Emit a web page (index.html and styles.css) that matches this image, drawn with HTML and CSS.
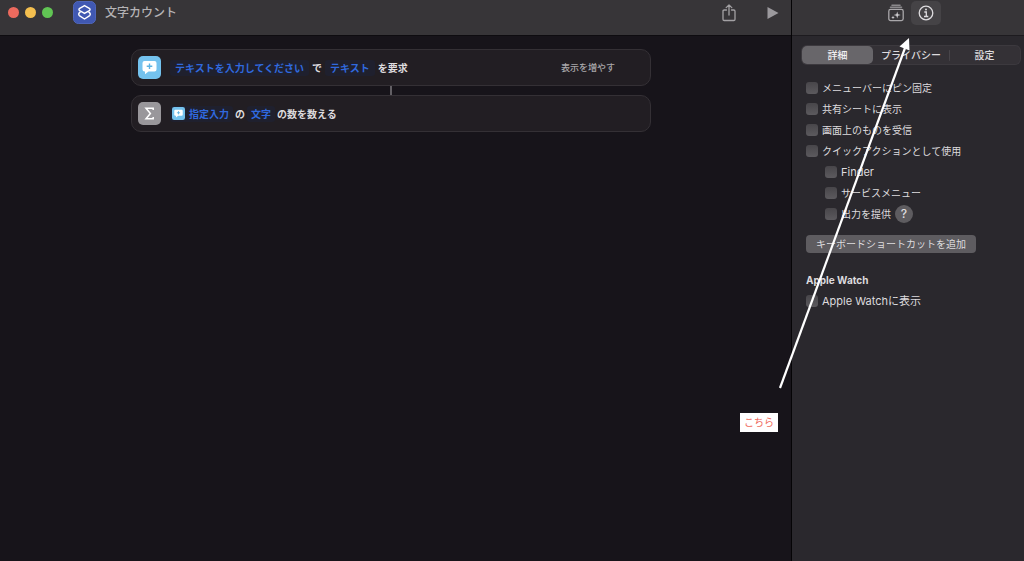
FILE: index.html
```html
<!DOCTYPE html>
<html lang="ja">
<head>
    <meta charset="UTF-8">
    <meta name="viewport" content="width=device-width, initial-scale=1.0">
    <title>文字カウント</title>
    <link rel="stylesheet" href="styles.css">
</head>
<body>
    <div class="window">
        <main class="editor">
            <header class="toolbar">
                <div class="lights">
                    <button class="light red" aria-label="閉じる"></button>
                    <button class="light yellow" aria-label="しまう"></button>
                    <button class="light green" aria-label="拡大"></button>
                </div>
                <svg class="app-icon" viewBox="0 0 24 24">
                    <rect x="0.5" y="0.5" width="23" height="23" rx="5" fill="#4058b2" stroke="#5268bd"/>
                    <g fill="none" stroke="#fff" stroke-width="1.5" stroke-linejoin="round" stroke-linecap="round">
                        <path d="M12 4.8 L17 7.6 Q18.6 8.8 17 10 L12 13 L7 10 Q5.4 8.8 7 7.6 Z"/>
                        <path d="M7.4 11.6 Q5 13.6 6.6 15.2 L12 18.8 L17.4 15.2 Q19 13.6 16.6 11.6"/>
                    </g>
                </svg>
                <h1 class="title">文字カウント</h1>
                <button class="tool share" aria-label="共有">
                    <svg width="16" height="18" viewBox="0 0 16 18" fill="none" stroke="#a3a1a4" stroke-width="1.3" stroke-linecap="round" stroke-linejoin="round">
                        <path d="M5.5 6 H3.2 Q2 6 2 7.2 V15.3 Q2 16.5 3.2 16.5 H12.8 Q14 16.5 14 15.3 V7.2 Q14 6 12.8 6 H10.5"/>
                        <path d="M8 11 V1 M5.2 3.6 L8 0.9 L10.8 3.6"/>
                    </svg>
                </button>
                <button class="tool" aria-label="実行">
                    <svg width="12" height="14" viewBox="0 0 12 14"><path d="M0.5 1 L11.5 7 L0.5 13 Z" fill="#9b999d"/></svg>
                </button>
            </header>

            <div class="actions">
                <section class="card">
                    <svg class="badge" viewBox="0 0 23 23">
                        <rect width="23" height="23" rx="5" fill="#74c2ee"/>
                        <path d="M6.5 5 H16.5 Q18.5 5 18.5 7 V13.5 Q18.5 15.5 16.5 15.5 H10.5 L7 18.2 V15.5 H6.5 Q4.5 15.5 4.5 13.5 V7 Q4.5 5 6.5 5 Z" fill="#fff"/>
                        <path d="M11.5 7.4 V13 M8.7 10.2 H14.3" stroke="#5db2e2" stroke-width="1.4"/>
                    </svg>
                    <p class="phrase ask">
                        <button class="token">テキストを入力してください</button>
                        <span>で</span>
                        <button class="token">テキスト</button>
                        <span>を要求</span>
                    </p>
                    <button class="more">表示を増やす</button>
                </section>
                <div class="connector"></div>
                <section class="card">
                    <svg class="badge" viewBox="0 0 23 23">
                        <rect width="23" height="23" rx="5" fill="#99979b"/>
                        <path d="M15.2 8 V6.3 H8 L12.4 11.4 L8 16.7 H15.2 V15" fill="none" stroke="#fff" stroke-width="1.5"/>
                    </svg>
                    <p class="phrase">
                        <button class="token variable">
                            <svg width="13" height="13" viewBox="0 0 23 23">
                                <rect width="23" height="23" rx="4" fill="#74c2ee"/>
                                <path d="M6 5 H17 Q19 5 19 7 V13.5 Q19 15.5 17 15.5 H11 L7 18.5 V15.5 H6 Q4 15.5 4 13.5 V7 Q4 5 6 5 Z" fill="#fff"/>
                                <path d="M11.5 7.4 V13 M8.7 10.2 H14.3" stroke="#5db2e2" stroke-width="1.6"/>
                            </svg>
                            指定入力
                        </button>
                        <span>の</span>
                        <button class="token">文字</button>
                        <span>の数を数える</span>
                    </p>
                </section>
            </div>
        </main>

        <aside class="sidebar">
            <header class="toolbar side-toolbar">
                <button class="tab-icon" aria-label="アクションライブラリ">
                    <svg width="16" height="18" viewBox="0 0 16 18" fill="none" stroke="#a9a7aa" stroke-width="1.3" stroke-linecap="round">
                        <rect x="0.8" y="5.4" width="14.4" height="11.2" rx="1.8"/>
                        <path d="M2.5 3.3 H13.5 M4 1.2 H12" stroke="#8b898c" stroke-width="1.6"/>
                        <path d="M9.2 7.4 L10 10.2 L12.8 11 L10 11.8 L9.2 14.6 L8.4 11.8 L5.6 11 L8.4 10.2 Z" fill="#d0ced1" stroke="none"/>
                        <path d="M5 11.6 L5.5 12.9 L6.8 13.4 L5.5 13.9 L5 15.2 L4.5 13.9 L3.2 13.4 L4.5 12.9 Z" fill="#d0ced1" stroke="none"/>
                    </svg>
                </button>
                <button class="tab-icon active" aria-label="情報">
                    <svg width="16" height="16" viewBox="0 0 16 16" fill="none" stroke="#dddbde" stroke-width="1.3">
                        <circle cx="8" cy="8" r="6.8"/>
                        <path d="M6.3 7 H8.3 V11.4 M6 11.5 H10.3"/>
                        <circle cx="8" cy="4.6" r="1" fill="#dddbde" stroke="none"/>
                    </svg>
                </button>
            </header>

            <nav class="segments">
                <button class="segment selected">詳細</button>
                <button class="segment wide">プライバシー</button>
                <button class="segment divided">設定</button>
            </nav>

            <form class="options">
                <label class="option"><input type="checkbox">メニューバーにピン固定</label>
                <label class="option"><input type="checkbox">共有シートに表示</label>
                <label class="option"><input type="checkbox">画面上のものを受信</label>
                <label class="option"><input type="checkbox">クイックアクションとして使用</label>
                <label class="option sub latin"><input type="checkbox">Finder</label>
                <label class="option sub"><input type="checkbox">サービスメニュー</label>
                <div class="option-row">
                    <label class="option sub"><input type="checkbox">出力を提供</label>
                    <button type="button" class="help">?</button>
                </div>
                <button type="button" class="shortcut">キーボードショートカットを追加</button>
                <h2 class="group">Apple Watch</h2>
                <label class="option latin"><input type="checkbox">Apple Watchに表示</label>
            </form>
        </aside>

        <!-- annotation pointing at the info tab -->
        <svg class="arrow" width="134" height="354" viewBox="0 0 134 354">
            <path d="M2 351 L127 11" stroke="#fff" stroke-width="2.2"/>
            <path d="M131 1 L131.5 13.5 L121.5 9.5 Z" fill="#fff"/>
        </svg>
        <div class="note">こちら</div>
    </div>
</body>
</html>
```
FILE: styles.css
```css
* {
    box-sizing: border-box;
}

body {
    margin: 0;
    font-family: Inter, "Noto Sans CJK JP", sans-serif;
    font-size: 10px;
    line-height: 16px;
    color: #dddbde;
    background: #17141a;
}

button {
    padding: 0;
    border: none;
    background: none;
    font: inherit;
    color: inherit;
}

svg {
    display: block;
    flex: none;
}

.window {
    position: relative;
    display: flex;
    min-height: 100vh;
}

.editor {
    flex: 1;
    min-width: 0;
}

.sidebar {
    width: 233px;
    background: #2a282d;
    border-left: 1px solid #050406;
}

.toolbar {
    display: flex;
    align-items: center;
    height: 36px;
    padding: 0 12px 10px 8px;
    background: #373538;
    border-bottom: 1px solid #0e0c10;
}

.lights {
    display: flex;
    gap: 6px;
    margin-right: 20px;
}

.light {
    width: 11px;
    height: 11px;
    border-radius: 50%;
}

.red {
    background: #ec6a5e;
}

.yellow {
    background: #f4bf4f;
}

.green {
    background: #61c554;
}

.app-icon {
    width: 23px;
    height: 23px;
    margin-right: 9px;
}

.title {
    flex: 1;
    margin: 0;
    font-size: 12px;
    font-weight: 500;
    color: #b5b3b6;
}

.share {
    margin-right: 30px;
}

/* Actions */
.actions {
    display: flex;
    flex-direction: column;
    align-items: center;
    padding: 13px 9px 13px 0;
}

.card {
    display: flex;
    align-items: center;
    width: 100%;
    max-width: 520px;
    height: 37px;
    padding: 0 35px 0 6px;
    background: #221e23;
    border: 1px solid #343035;
    border-radius: 10px;
}

.badge {
    width: 23px;
    height: 23px;
    margin-right: 9px;
}

.phrase {
    display: flex;
    flex: 1;
    align-items: center;
    gap: 2px;
    margin: 0;
    font-weight: 700;
}

.token {
    display: flex;
    align-items: center;
    gap: 4px;
    padding: 0 4px;
    border-radius: 3px;
    background: #1f202e;
    color: #3069df;
}

.ask {
    gap: 3px;
}

.ask .token {
    padding: 0 5px;
}

.variable {
    padding-left: 2px;
}

.more {
    font-size: 9px;
    font-weight: 500;
    color: #aaa8ab;
}

.connector {
    width: 2px;
    height: 9px;
    background: #625f64;
}

/* Sidebar */
.side-toolbar {
    justify-content: center;
    padding: 0 0 10px 6px;
    border-color: #1d1b1f;
}

.tab-icon {
    display: flex;
    align-items: center;
    justify-content: center;
    width: 30px;
    height: 24px;
    border-radius: 5px;
}

.tab-icon.active {
    background: #454346;
}

.segments {
    display: flex;
    height: 18px;
    margin: 10px 4px 0 10px;
    background: #343136;
    border-radius: 5px;
    box-shadow: 0 0 0 1px #3c393e;
}

.segment {
    flex: 1;
    border-radius: 5px;
    font-weight: 500;
}

.segment.selected {
    background: #68666a;
    color: #f2f0f3;
}

.segment.wide {
    flex: 0 0 76px;
}

.segment.divided {
    background: linear-gradient(#48454a, #48454a) left center / 1px 11px no-repeat;
}

.options {
    display: flex;
    flex-direction: column;
    align-items: flex-start;
    padding: 13px 14px;
}

.option {
    display: flex;
    align-items: center;
    gap: 4px;
    height: 21px;
}

.option-row {
    display: flex;
    align-items: center;
    gap: 4px;
}

.sub {
    margin-left: 19px;
}

.latin {
    font-size: 11px;
}

.option input {
    appearance: none;
    width: 12px;
    height: 12px;
    margin: 0;
    border-radius: 3px;
    background: linear-gradient(#48464a, #5c5a5e);
}

.help {
    width: 18px;
    height: 18px;
    border-radius: 50%;
    background: #5e5c60;
    font-size: 12px;
    font-weight: 500;
}

.shortcut {
    height: 18px;
    margin-top: 11px;
    padding: 0 10px;
    border-radius: 4px;
    background: #5e5c60;
}

.group {
    margin: 19px 0 2px;
    font-size: 10px;
    font-weight: 700;
}

/* Annotation */
.arrow {
    position: absolute;
    top: 37px;
    right: 112px;
    pointer-events: none;
}

.note {
    position: absolute;
    top: 413px;
    right: 246px;
    width: 38px;
    height: 19px;
    line-height: 18px;
    text-align: center;
    background: #fff;
    color: #ef6a5c;
}
```
